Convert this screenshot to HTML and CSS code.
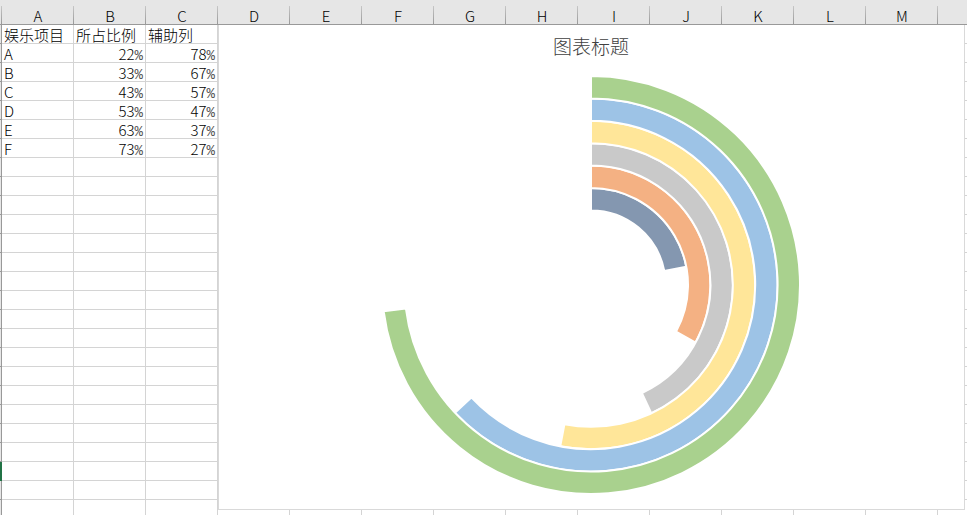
FILE: index.html
```html
<!DOCTYPE html>
<html lang="zh-CN">
<head>
<meta charset="utf-8">
<title>娱乐项目</title>
<link rel="stylesheet" href="styles.css">
</head>
<body>
<main class="sheet">
  <table class="grid">
    <colgroup><col class="col-index"><col span="14" class="col-data"></colgroup>
    <thead>
      <tr>
        <td class="corner"></td>
        <th scope="col">A</th><th scope="col">B</th><th scope="col">C</th><th scope="col">D</th>
        <th scope="col">E</th><th scope="col">F</th><th scope="col">G</th><th scope="col">H</th>
        <th scope="col">I</th><th scope="col">J</th><th scope="col">K</th><th scope="col">L</th>
        <th scope="col">M</th><th scope="col"></th>
      </tr>
    </thead>
    <tbody id="rows">
      <tr class="labels"><td class="index"></td><td>娱乐项目</td><td>所占比例</td><td>辅助列</td></tr>
      <tr><td class="index"></td><td>A</td><td class="num">22<span class="pct">%</span></td><td class="num">78<span class="pct">%</span></td></tr>
      <tr><td class="index"></td><td>B</td><td class="num">33<span class="pct">%</span></td><td class="num">67<span class="pct">%</span></td></tr>
      <tr><td class="index"></td><td>C</td><td class="num">43<span class="pct">%</span></td><td class="num">57<span class="pct">%</span></td></tr>
      <tr><td class="index"></td><td>D</td><td class="num">53<span class="pct">%</span></td><td class="num">47<span class="pct">%</span></td></tr>
      <tr><td class="index"></td><td>E</td><td class="num">63<span class="pct">%</span></td><td class="num">37<span class="pct">%</span></td></tr>
      <tr><td class="index"></td><td>F</td><td class="num">73<span class="pct">%</span></td><td class="num">27<span class="pct">%</span></td></tr>
    </tbody>
  </table>
  <figure class="chart">
    <figcaption class="chart-title">图表标题</figcaption>
    <svg class="rings" id="rings" viewBox="-210 -210 420 420" width="420" height="420" aria-hidden="true"></svg>
  </figure>
</main>
<script src="script.js"></script>
</body>
</html>
```
FILE: styles.css
```css
* {
  box-sizing: border-box;
}

body {
  margin: 0;
  background: #fff;
  color: #000;
  font: 15px/16px "Noto Sans CJK SC", sans-serif;
  font-weight: 300;
}

.sheet {
  position: relative;
  height: 100vh;
  overflow: hidden;
}

.grid {
  table-layout: fixed;
  width: 1010px;
  border-collapse: separate;
  border-spacing: 0;
}

.col-index {
  width: 2px;
}

.col-data {
  width: 72px;
}

.grid th,
.grid td {
  padding: 2px 2px 0;
  white-space: nowrap;
}

.grid th,
.grid .corner {
  height: 25px;
  padding-top: 8px;
  border-bottom: 1px solid #999;
  background: linear-gradient(#c6c6c6, #999) right bottom / 1px 18px no-repeat #e6e6e6;
  font-weight: 300;
}

.grid tbody td {
  height: 19px;
  border-right: 1px solid #d4d4d4;
  border-bottom: 1px solid #d4d4d4;
}

.grid tbody .index {
  padding: 0;
  border-right-color: #999;
  border-bottom-color: #999;
  background: #e6e6e6;
}

.grid tbody .active {
  border-color: #217346;
  background: #217346;
}

.grid .num {
  text-align: right;
}

.pct {
  color: #555;
  font: 14px/0 "Liberation Mono", monospace;
}

.chart {
  position: absolute;
  top: 25px;
  right: 2px;
  bottom: 5px;
  left: 218px;
  display: flex;
  flex-direction: column;
  align-items: center;
  margin: 0;
  padding: 8px 1px 0 0;
  border: 1px solid #d9d9d9;
  border-top: 0;
  background: #fff;
}

.chart-title {
  color: #404040;
  font-size: 19px;
  line-height: 26px;
}

.rings {
  flex: none;
  margin-top: 16px;
}

.ring {
  stroke: #fff;
  stroke-width: 2;
}
```
FILE: script.js
```js
const rows = document.getElementById("rows");
const ROW_COUNT = 26;
const ACTIVE_ROW = 24;

for (let i = rows.rows.length; i < ROW_COUNT; i++) {
  rows.insertRow();
}
for (const row of rows.rows) {
  while (row.cells.length < 15) row.insertCell();
  row.cells[0].className = "index";
}
rows.rows[ACTIVE_ROW - 1].cells[0].classList.add("active");

// One ring per category, from the innermost outwards.
const series = [
  [0.22, "#8497b0"],
  [0.33, "#f4b183"],
  [0.43, "#c9c9c9"],
  [0.53, "#ffe699"],
  [0.63, "#9dc3e6"],
  [0.73, "#a9d18e"]
];
const OUTER = 209;
const BAND = 22.4;
const svg = document.getElementById("rings");

series.forEach(([share, color], i) => {
  const outer = OUTER - BAND * (series.length - 1 - i);
  const inner = outer - BAND;
  const angle = share * 2 * Math.PI;
  const large = share > 0.5 ? 1 : 0;
  const at = r => `${r * Math.sin(angle)} ${-r * Math.cos(angle)}`;
  const path = document.createElementNS("http://www.w3.org/2000/svg", "path");
  path.setAttribute("d",
    `M0 ${-outer}A${outer} ${outer} 0 ${large} 1 ${at(outer)}` +
    `L${at(inner)}A${inner} ${inner} 0 ${large} 0 0 ${-inner}Z`);
  path.setAttribute("fill", color);
  path.setAttribute("class", "ring");
  svg.append(path);
});
```
